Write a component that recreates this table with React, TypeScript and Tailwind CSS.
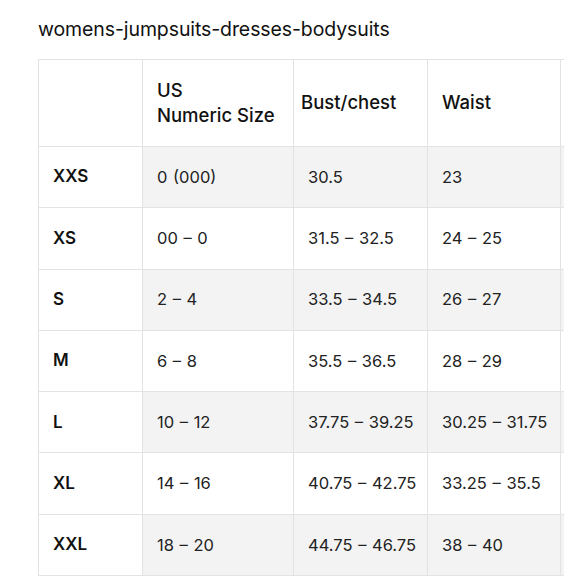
const rows = [
  { size: 'XXS', us: '0 (000)', bust: '30.5', waist: '23' },
  { size: 'XS', us: '00 – 0', bust: '31.5 – 32.5', waist: '24 – 25' },
  { size: 'S', us: '2 – 4', bust: '33.5 – 34.5', waist: '26 – 27' },
  { size: 'M', us: '6 – 8', bust: '35.5 – 36.5', waist: '28 – 29' },
  { size: 'L', us: '10 – 12', bust: '37.75 – 39.25', waist: '30.25 – 31.75' },
  { size: 'XL', us: '14 – 16', bust: '40.75 – 42.75', waist: '33.25 – 35.5' },
  { size: 'XXL', us: '18 – 20', bust: '44.75 – 46.75', waist: '38 – 40' },
]

export default function App() {
  return (
    <div
      className="w-[580px] h-[580px] bg-white overflow-hidden pl-[38px] pt-[17px] text-[#1a1a1a]"
      style={{ fontFamily: 'Inter, "Liberation Sans", sans-serif' }}
    >
      <h1 className="text-[19.5px] leading-[24px] font-normal text-[#111] tracking-[-0.1px]">
        womens-jumpsuits-dresses-bodysuits
      </h1>

      {/* Size chart table, the next column runs off to the right */}
      <div className="mt-[18px] w-[526px] overflow-hidden">
        <table className="border-collapse table-fixed w-[540px] text-[16.5px] whitespace-nowrap">
          <colgroup>
            <col className="w-[104px]" />
            <col className="w-[151px]" />
            <col className="w-[134px]" />
            <col className="w-[133px]" />
            <col className="w-[18px]" />
          </colgroup>
          <thead>
            <tr className="h-[87px]">
              <th className="border border-[#e3e3e3] bg-white" />
              <th className="border border-[#e3e3e3] px-[14px] text-left font-medium text-[18.5px] leading-[25px] text-[#111]">
                US
                <br />
                Numeric Size
              </th>
              <th className="border border-[#e3e3e3] px-[7px] text-left font-medium text-[18.5px] text-[#111]">
                Bust/chest
              </th>
              <th className="border border-[#e3e3e3] px-[14px] text-left font-medium text-[18.5px] text-[#111]">
                Waist
              </th>
              <th className="border border-[#e3e3e3]" />
            </tr>
          </thead>
          <tbody>
            {rows.map((row, index) => {
              const shade = index % 2 === 0 ? 'bg-[#f3f3f3]' : 'bg-white'
              return (
                <tr key={row.size} className="h-[61.3px]">
                  <td className="border border-[#e3e3e3] bg-white px-[14px] font-semibold text-[17px] text-[#111]">
                    {row.size}
                  </td>
                  <td className={`border border-[#e3e3e3] px-[14px] text-[#222] [word-spacing:1px] ${shade}`}>{row.us}</td>
                  <td className={`border border-[#e3e3e3] px-[14px] text-[#222] [word-spacing:1px] ${shade}`}>{row.bust}</td>
                  <td className={`border border-[#e3e3e3] px-[14px] text-[#222] [word-spacing:1px] ${shade}`}>{row.waist}</td>
                  <td className={`border border-[#e3e3e3] ${shade}`} />
                </tr>
              )
            })}
          </tbody>
        </table>
      </div>
    </div>
  )
}
